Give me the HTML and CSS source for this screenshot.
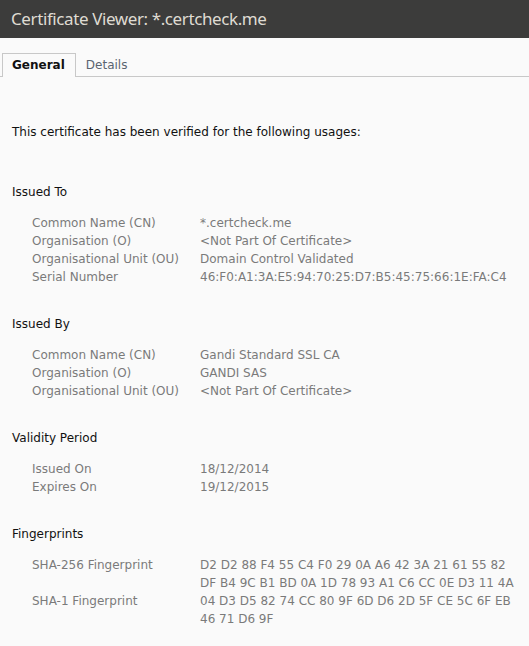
FILE: index.html
```html
<!DOCTYPE html>
<html>
<head>
<meta charset="utf-8">
<link rel="stylesheet" href="styles.css">
</head>
<body>
<div class="titlebar">Certificate Viewer: *.certcheck.me</div>
<div class="tabs">
  <div class="tab active">General</div>
  <div class="tab">Details</div>
</div>
<div class="content">
  <p class="intro">This certificate has been verified for the following usages:</p>

  <h2 class="heading first">Issued To</h2>
  <div class="grid">
    <div class="label">Common Name (CN)</div><div class="value">*.certcheck.me</div>
    <div class="label">Organisation (O)</div><div class="value">&lt;Not Part Of Certificate&gt;</div>
    <div class="label">Organisational Unit (OU)</div><div class="value">Domain Control Validated</div>
    <div class="label">Serial Number</div><div class="value">46:F0:A1:3A:E5:94:70:25:D7:B5:45:75:66:1E:FA:C4</div>
  </div>

  <h2 class="heading">Issued By</h2>
  <div class="grid">
    <div class="label">Common Name (CN)</div><div class="value">Gandi Standard SSL CA</div>
    <div class="label">Organisation (O)</div><div class="value">GANDI SAS</div>
    <div class="label">Organisational Unit (OU)</div><div class="value">&lt;Not Part Of Certificate&gt;</div>
  </div>

  <h2 class="heading">Validity Period</h2>
  <div class="grid">
    <div class="label">Issued On</div><div class="value">18/12/2014</div>
    <div class="label">Expires On</div><div class="value">19/12/2015</div>
  </div>

  <h2 class="heading">Fingerprints</h2>
  <div class="grid">
    <div class="label">SHA-256 Fingerprint</div><div class="value fp">D2 D2 88 F4 55 C4 F0 29 0A A6 42 3A 21 61 55 82<br>DF B4 9C B1 BD 0A 1D 78 93 A1 C6 CC 0E D3 11 4A</div>
    <div class="label">SHA-1 Fingerprint</div><div class="value fp">04 D3 D5 82 74 CC 80 9F 6D D6 2D 5F CE 5C 6F EB<br>46 71 D6 9F</div>
  </div>
</div>
</body>
</html>
```

FILE: styles.css
```css
html, body {
  margin: 0;
  padding: 0;
  background: #fafafa;
  font-family: "DejaVu Sans", sans-serif;
  font-size: 12px;
}
.titlebar {
  height: 38px;
  background: #3c3c3b;
  color: #dfdbd2;
  font-family: "Noto Sans", sans-serif;
  font-size: 17px;
  letter-spacing: -0.4px;
  line-height: 37px;
  padding-left: 11px;
}
.tabs {
  display: flex;
  margin-top: 15px;
  padding-left: 2px;
  border-bottom: 1px solid #c8c8c8;
  height: 23px;
}
.tab {
  padding: 0 10px;
  line-height: 24px;
  color: #5a6470;
  font-size: 12px;
}
.tab.active {
  color: #111;
  font-weight: bold;
  border: 1px solid #c8c8c8;
  border-bottom: none;
  background: #fafafa;
  margin-bottom: -1px;
  height: 23px;
  line-height: 23px;
  padding: 0 10px 0 9px;
}
.content {
  padding: 0 12px;
  color: #111;
}
.intro {
  margin: 46px 0 0;
  line-height: 18px;
}
.heading {
  font-size: 12px;
  font-weight: normal;
  margin: 42px 0 0;
  line-height: 18px;
}
.grid {
  display: grid;
  grid-template-columns: 168px 1fr;
  padding-left: 20px;
  margin-top: 13px;
  color: #7a7a7a;
  line-height: 18px;
}
.grid + .heading { margin-top: 29px; }
```
